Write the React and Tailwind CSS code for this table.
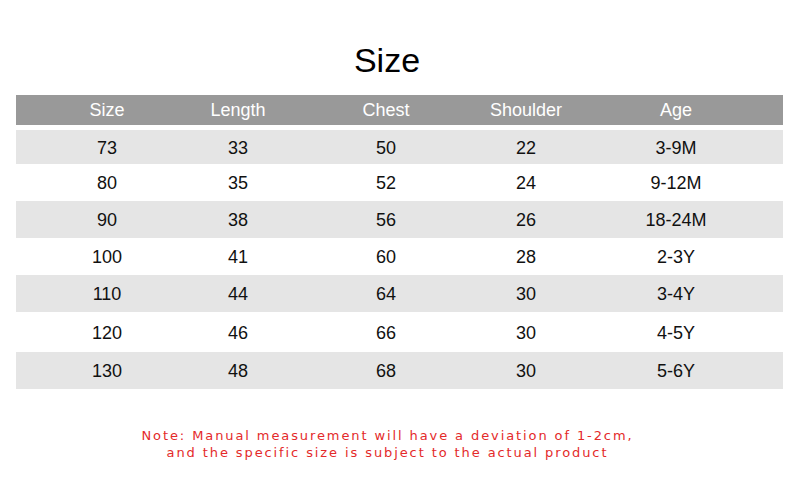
import React from "react";

const rows = [
  ["73", "33", "50", "22", "3-9M", 34, true],
  ["80", "35", "52", "24", "9-12M", 37, false],
  ["90", "38", "56", "26", "18-24M", 37, true],
  ["100", "41", "60", "28", "2-3Y", 37, false],
  ["110", "44", "64", "30", "3-4Y", 37, true],
  ["120", "46", "66", "30", "4-5Y", 40, false],
  ["130", "48", "68", "30", "5-6Y", 37, true],
];

const Cells = ({ values }) => (
  <>
    {values.map((v, i) => (
      <div
        key={i}
        className={`flex justify-center whitespace-nowrap ${i === 4 ? "pl-[11px]" : ""}`}
      >
        {v}
      </div>
    ))}
  </>
);

const App = () => {
  return (
    <div
      className="w-[799px] h-[499px] bg-white overflow-hidden"
      style={{ fontFamily: "'Liberation Sans', Arial, sans-serif" }}
    >
      <h1 className="h-[95px] pt-[43px] pr-[25px] text-center text-[34px] leading-[34px] text-black">
        Size
      </h1>
      <div className="mx-[16px] w-[767px]">
        <div className="grid grid-cols-[182px_80px_216px_64px_1fr] items-center h-[30px] bg-[#999999] text-white text-[18px] pt-[1px]">
          <Cells values={["Size", "Length", "Chest", "Shoulder", "Age"]} />
        </div>
        <div className="mt-[5px]">
          {rows.map((r, i) => (
            <div
              key={i}
              style={{ height: r[5] }}
              className={`grid grid-cols-[182px_80px_216px_64px_1fr] items-center pt-[2px] text-[18px] text-[#111111] ${
                r[6] ? "bg-[#e5e5e5]" : "bg-white"
              }`}
            >
              <Cells values={r.slice(0, 5)} />
            </div>
          ))}
        </div>
      </div>
      <div
        className="mt-[38px] pr-[24px] text-center text-[13px] leading-[17px] tracking-[1.9px] text-[#e42a2a]"
        style={{ fontFamily: "'DejaVu Sans', sans-serif" }}
      >
        <p>Note: Manual measurement will have a deviation of 1-2cm,</p>
        <p>and the specific size is subject to the actual product</p>
      </div>
    </div>
  );
};

export default App;
